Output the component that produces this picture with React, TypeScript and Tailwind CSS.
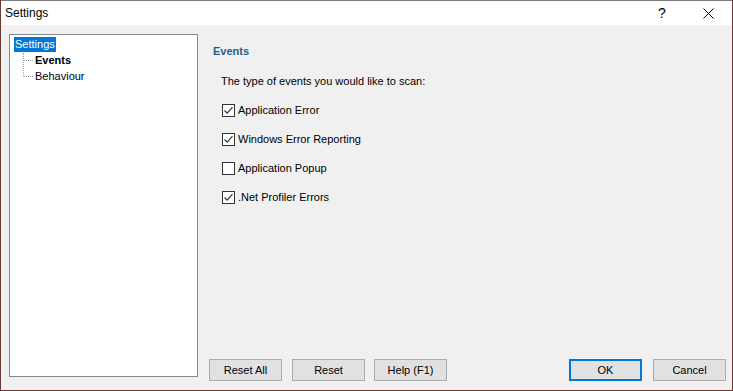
import React from 'react';

const font = { fontFamily: '"Segoe UI", "Liberation Sans", Arial, sans-serif' };

function CheckBox({ checked, label }: { checked: boolean; label: string }) {
  return (
    <label className="flex items-center h-[14px] gap-[3px] text-[11px] text-black">
      <span className="w-[13px] h-[13px] border border-[#333333] bg-white flex items-center justify-center">
        {checked && (
          <svg width="11" height="11" viewBox="0 0 11 11">
            <path d="M1.5 5.5 L4.2 8.2 L9.5 2.2" fill="none" stroke="#333333" strokeWidth="1.2" />
          </svg>
        )}
      </span>
      <span>{label}</span>
    </label>
  );
}

function Btn({ children, primary, className = '' }: { children: React.ReactNode; primary?: boolean; className?: string }) {
  return (
    <button
      className={
        'block h-[22px] w-[73px] bg-[#e1e1e1] text-[11px] text-black leading-none ' +
        (primary ? 'border-2 border-[#0078d7] ' : 'border border-[#adadad] ') +
        className
      }
    >
      {children}
    </button>
  );
}

export default function App() {
  return (
    <div className="w-[733px] h-[391px] bg-[#6b3a36] px-px pb-px" style={font}>
      <div className="w-full h-full flex flex-col bg-[#f0f0f0] border-t border-[#7a7a7a]">
        {/* Title bar */}
        <div className="h-[24px] bg-white flex items-center pl-[4px] text-[12px] text-black">
          <span className="flex-1">Settings</span>
          <span className="w-[46px] text-center text-[14px]">?</span>
          <span className="w-[46px] flex items-center justify-center mr-[1px]">
            <svg width="11" height="11" viewBox="0 0 11 11">
              <path d="M0.5 0.5 L10.5 10.5 M10.5 0.5 L0.5 10.5" stroke="#000" strokeWidth="1" />
            </svg>
          </span>
        </div>

        <div className="flex-1 flex pt-[9px] pl-[8px] pr-[6px] pb-[9px]">
          {/* Tree */}
          <div className="w-[189px] h-[343px] shrink-0 bg-white border border-[#828790] pt-[1px] pl-[4px] text-[11px] text-black">
            <div className="inline-block bg-[#0078d7] text-white px-[1px] h-[15px] leading-[15px]">Settings</div>
            <div className="relative pl-[21px]">
              <div className="absolute left-[9px] top-0 h-[24px] border-l border-dotted border-[#a0a0a0]" />
              <div className="flex items-center h-[16px]">
                <span className="absolute left-[9px] w-[10px] border-t border-dotted border-[#a0a0a0]" />
                <span className="font-bold">Events</span>
              </div>
              <div className="flex items-center h-[16px]">
                <span className="absolute left-[9px] w-[10px] border-t border-dotted border-[#a0a0a0]" />
                <span>Behaviour</span>
              </div>
            </div>
          </div>

          {/* Right panel */}
          <div className="flex-1 flex flex-col pl-[15px]">
            <div className="text-[11px] font-bold text-[#1f5f8f] mt-[9px] h-[16px] leading-[16px]">Events</div>
            <div className="pl-[8px] flex flex-col">
              <div className="text-[11px] text-black mt-[14px] h-[16px] leading-[16px]">The type of events you would like to scan:</div>
              <div className="flex flex-col gap-[15px] mt-[14px] pl-px">
                <CheckBox checked label="Application Error" />
                <CheckBox checked label="Windows Error Reporting" />
                <CheckBox checked={false} label="Application Popup" />
                <CheckBox checked label=".Net Profiler Errors" />
              </div>
            </div>
            <div className="mt-auto flex items-center -ml-[4px]">
              <Btn>Reset All</Btn>
              <Btn className="ml-[10px]">Reset</Btn>
              <Btn className="ml-[9px]">Help (F1)</Btn>
              <Btn primary className="ml-auto">OK</Btn>
              <Btn className="ml-[11px]">Cancel</Btn>
            </div>
          </div>
        </div>
      </div>
    </div>
  );
}
